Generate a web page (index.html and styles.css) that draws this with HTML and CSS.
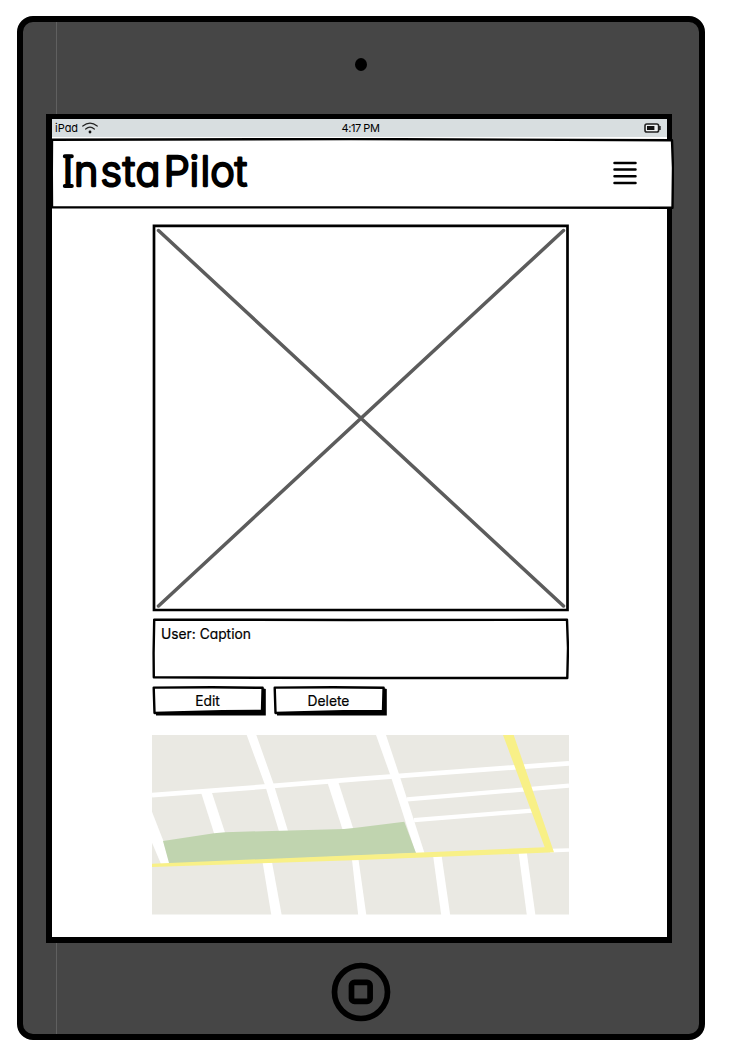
FILE: index.html
```html
<!DOCTYPE html>
<html lang="en">
<head>
<meta charset="utf-8">
<title>InstaPilot</title>
<link rel="stylesheet" href="styles.css">
</head>
<body>
<div class="tablet">
  <div class="bezel-top"><span class="camera"></span></div>
  <main class="screen">
    <div class="status">
      <span class="carrier">iPad
        <svg class="wifi" viewBox="0 0 16 12" width="16" height="12" fill="none" stroke="#222" stroke-width="1.2" stroke-linecap="round"><path d="M.8 4Q8-1.8 15.2 4M3.7 7Q8 3.2 12.3 7"/><circle cx="8" cy="10" r="1.4" fill="#111" stroke="none"/></svg>
      </span>
      <span class="time">4:17 PM</span>
      <svg class="battery" viewBox="0 0 17 10" width="17" height="10"><rect x="1" y="1" width="13.6" height="8" rx="1.8" fill="#eef1f2" stroke="#222" stroke-width="1.6"/><path d="M15.9 3v4" stroke="#222" stroke-width="1.6"/><path d="M3 3h7.4v4H3z" fill="#111"/></svg>
    </div>
    <header class="header">
      <svg class="sketch" viewBox="0 0 623 71"><path d="M1 1.8L300 1L621 2.3L622 30L621.5 69.8L310 69.4L1 69.3L.8 35Z" fill="#fff" stroke="#000" stroke-width="2.4" stroke-linejoin="round"/></svg>
      <h1 class="brand"><svg viewBox="0 0 190 58" width="190" height="58"><text class="wordmark" y="42.3" x="0.6 12 38.5 60.8 73.5 101.8 127.5 138.5 148.2 172.8">InstaPilot</text><path class="serifs" d="M2.8 12.3H9.8M2.8 41.9H9.8"/></svg></h1>
      <svg class="menu" viewBox="0 0 24 24" width="24" height="24" stroke="#000" stroke-width="2.5" stroke-linecap="round"><path d="M1.5 1.9h21M1.5 8.6h21M1.5 15.3h21M1.5 22h21"/></svg>
    </header>
    <section class="post">
      <svg class="photo" viewBox="0 0 417 388" width="417" height="388" fill="none"><path d="M2 1.8H415.5V386H2Z" stroke="#000" stroke-width="2.7"/><path d="M6.5 6.5L411.5 382M411.5 6.5L6.5 382" stroke="#5c5c5c" stroke-width="3.5" stroke-linecap="round"/></svg>
      <div class="caption">
        <svg class="sketch" viewBox="0 0 417 62"><path d="M2.2 1.6L200 2L415 1.8L416 30L415.3 60L220 60L120 59.8L1.8 59.2L1.6 35Z" fill="#fff" stroke="#000" stroke-width="2.4" stroke-linejoin="round"/></svg>
        <p class="text">User: Caption</p>
      </div>
      <div class="actions">
        <button class="button"><svg class="sketch" viewBox="0 0 114 31"><path d="M4 26V29.5H113.8V3L110 2V26Z"/><path d="M1.7 1.6L60 1.3L110.6 1.8L110 25L70 25.2L2.5 27Z" fill="#fff" stroke="#000" stroke-width="2.4" stroke-linejoin="round"/></svg><span class="text">Edit</span></button>
        <button class="button"><svg class="sketch" viewBox="0 0 114 31"><path d="M4 26V29.5H113.8V3L110 2V26Z"/><path d="M1.7 1.6L60 1.3L110.6 1.8L110 25L70 25.2L2.5 27Z" fill="#fff" stroke="#000" stroke-width="2.4" stroke-linejoin="round"/></svg><span class="text">Delete</span></button>
      </div>
      <svg class="map" viewBox="0 0 417 180" width="417" height="180">
        <path d="M0 0h417v179.5H0z" fill="#eae9e3"/>
        <g fill="none" stroke="#fff">
          <path d="M0 60.2L112 51.7L208 43.8L417 28.3" stroke-width="4.8"/>
          <path d="M255 64.3L417 50.7M262 85.2L380 75.7" stroke-width="4.2"/>
          <path d="M398 115.6L417 115" stroke-width="3.6"/>
        </g>
        <g fill="#fff">
          <path d="M94.7 0H104.3L121.3 48L136.3 97H127.2L113 50Z"/>
          <path d="M49.2 58L59.7 57L73.5 99H62.3Z"/>
          <path d="M175.3 47L186 46L202 96H191Z"/>
          <path d="M0 76.7L11 105L18 129H9L0 107.7Z"/>
          <path d="M224 0H234L248 42L272.8 119H264L239 42Z"/>
          <path d="M110.4 126H119.8L129.7 180H119.3Z"/>
          <path d="M199.8 123H206.3L214.3 180H206.2Z"/>
          <path d="M281 120H289.5L298.2 180H289.2Z"/>
          <path d="M366.5 117H374.7L383.4 180H374.8Z"/>
        </g>
        <path d="M11 106L62 98.3L73 97.2L192 94L204 92.8L252.3 86.7L264 118L17.3 129Z" fill="#c0d4af"/>
        <path d="M0 128.7L392.7 112.3L351 0H361.7L402 117.3L208 125L0 132Z" fill="#f8f087"/>
      </svg>
    </section>
  </main>
  <div class="bezel-bottom">
    <svg viewBox="0 0 60 60" width="60" height="60" fill="none" stroke="#000" stroke-width="5.7"><circle cx="30" cy="30" r="26.5"/><rect x="20.5" y="20.4" width="18.6" height="19" rx="3"/></svg>
  </div>
</div>
</body>
</html>
```
FILE: styles.css
```css
* { box-sizing: border-box; }
body {
  margin: 0;
  padding: 16px 0 0 17px;
  height: 1060px;
  overflow: hidden;
  background: #fff;
  color: #000;
  font-family: Inter, "Liberation Sans", sans-serif;
  font-feature-settings: "cv11";
}
svg { display: block; flex: none; }
.tablet {
  display: flex;
  flex-direction: column;
  width: 688px;
  height: 1024px;
  border: 6px solid #000;
  border-radius: 16px;
  background: linear-gradient(#606060, #606060) 33px 0 / 1px 100% no-repeat #464646;
}
.bezel-top {
  display: flex;
  justify-content: center;
  height: 92px;
  padding-top: 36px;
}
.camera { width: 12px; height: 13px; border-radius: 50%; background: #000; }
.screen {
  width: 626px;
  height: 829px;
  margin-left: 23px;
  border: solid #000;
  border-width: 5px 5px 6px 6px;
  background: #fff;
}
.status {
  display: grid;
  grid-template-columns: 1fr auto 1fr;
  align-items: center;
  height: 18px;
  padding: 0 6px 0 3px;
  background: #d8dee0;
  font-size: 11px;
  line-height: 18px;
}
.carrier { display: flex; align-items: center; gap: 4px; }
.time { padding-left: 5px; letter-spacing: -0.45px; }
.battery { justify-self: end; }
.header {
  position: relative;
  display: flex;
  align-items: center;
  justify-content: space-between;
  width: 623px;
  height: 71px;
  margin: 1px 0 0 -1px;
  padding: 0 37px 1px 11px;
}
.sketch { position: absolute; inset: 0; width: 100%; height: 100%; }
.brand { position: relative; margin: 0; }
.wordmark {
  font-size: 41.5px;
  font-weight: 300;
  fill: #000;
  stroke: #000;
  stroke-width: 2.3px;
  stroke-linejoin: round;
}
.serifs { stroke: #000; stroke-width: 4px; stroke-linecap: round; }
.menu { position: relative; }
.post { width: 417px; margin: 15px 0 0 100px; }
.caption { position: relative; height: 62px; margin-top: 6px; padding: 7px 9px; }
.text { position: relative; margin: 0; font-size: 13.8px; line-height: 18px; -webkit-text-stroke: 0.2px #000; }
.actions { display: flex; gap: 7px; margin: 6px 0 0 0; }
.button {
  position: relative;
  width: 114px;
  height: 31px;
  padding: 0 3px 3px 0;
  border: 0;
  background: none;
  color: #000;
  font: inherit;
  font-feature-settings: inherit;
}
.map { margin-top: 18px; }
.bezel-bottom { display: flex; justify-content: center; padding-top: 19px; }
```
